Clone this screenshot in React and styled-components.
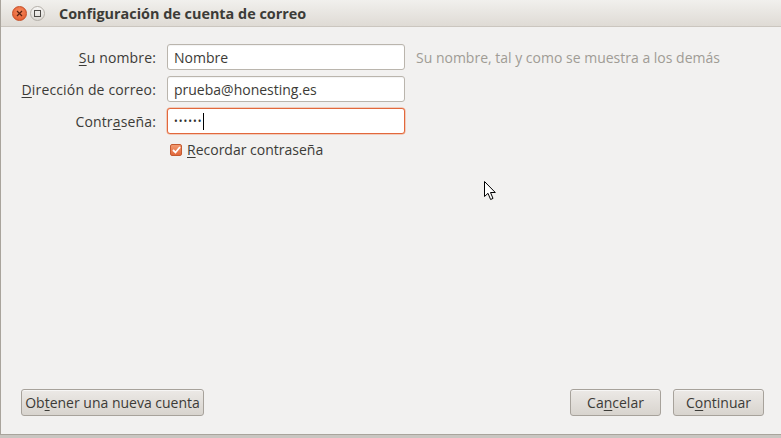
import React from 'react';
import styled, { createGlobalStyle } from 'styled-components';

const GlobalStyle = createGlobalStyle`
  html, body {
    margin: 0;
    padding: 0;
    width: 781px;
    height: 438px;
    overflow: hidden;
    background: #c9c6c1;
    font-family: "Open Sans", "DejaVu Sans", sans-serif;
  }
`;

const Screen = styled.div`
  width: 781px;
  height: 438px;
  display: flex;
  flex-direction: column;
  position: relative;
`;

const Window = styled.div`
  height: 435px;
  display: flex;
  flex-direction: column;
  background: #f2f1f0;
  border-left: 1px solid #a9a49c;
  border-bottom: 1px solid #a9a49c;
  box-sizing: border-box;
`;

const TitleBar = styled.div`
  height: 27px;
  box-sizing: border-box;
  display: flex;
  align-items: center;
  padding-left: 11px;
  gap: 3px;
  background: linear-gradient(#f1f0ed, #dfdbd5);
  border-bottom: 1px solid #cbc6bf;
`;

const WinButton = styled.div`
  width: 15px;
  height: 15px;
  border-radius: 50%;
  box-sizing: border-box;
  display: flex;
  align-items: center;
  justify-content: center;
  background: ${p => (p.$close ? 'radial-gradient(circle at 50% 35%, #f78a5e, #e0572a)' : 'linear-gradient(#f7f6f4, #dcd9d4)')};
  border: 1px solid ${p => (p.$close ? '#c64b22' : '#b4b0a9')};
`;

const Title = styled.div`
  margin-left: 11px;
  font-weight: 700;
  font-size: 14.4px;
  color: #3c3b37;
`;

const Body = styled.div`
  flex: 1;
  padding: 17px 0 0 0;
`;

const Form = styled.div`
  display: grid;
  grid-template-columns: 155px 238px auto;
  column-gap: 11px;
  row-gap: 6px;
  align-items: center;
`;

const Label = styled.label`
  text-align: right;
  font-size: 14px;
  letter-spacing: 0.15px;
  color: #3c3b37;
  white-space: nowrap;
`;

const Input = styled.div`
  height: 26px;
  box-sizing: border-box;
  border: 1px solid ${p => (p.$focus ? '#e2683c' : '#bab5ad')};
  border-radius: 3px;
  background: #fff;
  display: flex;
  align-items: center;
  padding-left: 6px;
  font-size: 14px;
  color: #3c3b37;
  box-shadow: ${p => (p.$focus ? '0 0 0 0.5px #f0a888' : 'inset 0 1px 1px rgba(0,0,0,0.05)')};
`;

const Dots = styled.span`
  font-size: 10px;
  letter-spacing: 1px;
  color: #2e2d2a;
`;

const Caret = styled.span`
  display: inline-block;
  width: 1px;
  height: 17px;
  background: #000;
`;

const Hint = styled.span`
  font-size: 14px;
  color: #a09c95;
  white-space: nowrap;
`;

const CheckRow = styled.div`
  grid-column: 2 / 4;
  display: flex;
  align-items: center;
  gap: 5px;
  padding-left: 3px;
  font-size: 14px;
  color: #3c3b37;
`;

const Box = styled.span`
  width: 12px;
  height: 12px;
  box-sizing: border-box;
  border-radius: 2px;
  background: linear-gradient(#f29a70, #e2683c);
  border: 1px solid #c45a30;
  display: flex;
  align-items: center;
  justify-content: center;
`;

const U = styled.span`
  text-decoration: underline;
  text-underline-offset: 2px;
`;

const Footer = styled.div`
  display: flex;
  align-items: center;
  padding: 0 17px 18px 20px;
  gap: 12px;
`;

const Spacer = styled.div`
  flex: 1;
`;

const Button = styled.button`
  height: 27px;
  width: ${p => p.$w}px;
  box-sizing: border-box;
  border: 1px solid #a7a29b;
  border-radius: 3px;
  background: linear-gradient(#ece9e6, #d8d4ce);
  font-family: inherit;
  font-size: 14px;
  color: #3c3b37;
  padding: 0;
  box-shadow: inset 0 1px 0 rgba(255,255,255,0.6);
`;

const Pointer = styled.svg`
  position: absolute;
  left: 484px;
  top: 181px;
`;

export default function App() {
  return (
    <Screen>
      <GlobalStyle />
      <Window>
        <TitleBar>
          <WinButton $close>
            <svg width="7" height="7" viewBox="0 0 7 7">
              <path d="M1 1 L6 6 M6 1 L1 6" stroke="#5a2110" strokeWidth="1.3" />
            </svg>
          </WinButton>
          <WinButton>
            <svg width="7" height="7" viewBox="0 0 7 7">
              <rect x="0.5" y="0.5" width="6" height="6" fill="none" stroke="#4c4a46" strokeWidth="1" />
            </svg>
          </WinButton>
          <Title>Configuración de cuenta de correo</Title>
        </TitleBar>
        <Body>
          <Form>
            <Label><U>S</U>u nombre:</Label>
            <Input>Nombre</Input>
            <Hint>Su nombre, tal y como se muestra a los demás</Hint>

            <Label><U>D</U>irección de correo:</Label>
            <Input>prueba@honesting.es</Input>
            <span />

            <Label>Contr<U>a</U>seña:</Label>
            <Input $focus><Dots>••••••</Dots><Caret /></Input>
            <span />

            <span />
            <CheckRow>
              <Box>
                <svg width="9" height="8" viewBox="0 0 9 8">
                  <path d="M1 4 L3.5 6.5 L8 1" fill="none" stroke="#fff" strokeWidth="1.8" />
                </svg>
              </Box>
              <span><U>R</U>ecordar contraseña</span>
            </CheckRow>
          </Form>
        </Body>
        <Footer>
          <Button $w={183}>Ob<U>t</U>ener una nueva cuenta</Button>
          <Spacer />
          <Button $w={91}>Ca<U>n</U>celar</Button>
          <Button $w={91}>C<U>o</U>ntinuar</Button>
        </Footer>
      </Window>
      <Pointer width="13" height="20" viewBox="0 0 13 20">
        <path d="M0.5 0.5 L0.5 15.5 L4 12.3 L6.6 18.5 L9 17.4 L6.5 11.5 L11.3 11.5 Z" fill="#fff" stroke="#000" strokeWidth="1" strokeLinejoin="miter" />
      </Pointer>
    </Screen>
  );
}
